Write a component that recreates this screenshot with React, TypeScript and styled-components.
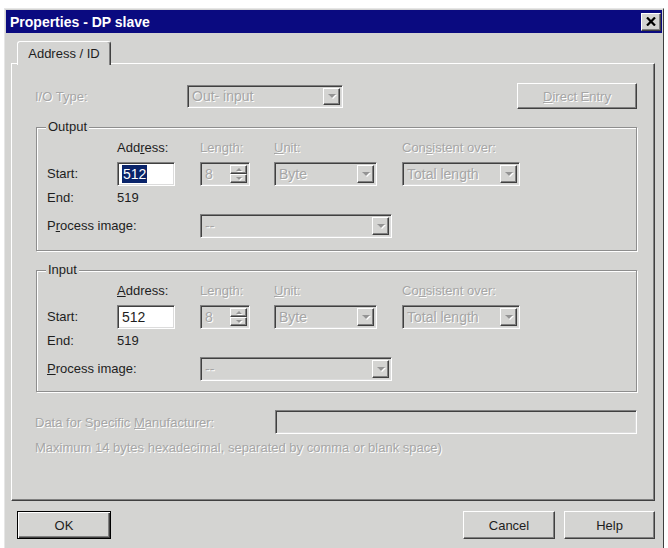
import styled, { createGlobalStyle } from 'styled-components';

const FACE = '#d4d4d2';

const GlobalStyle = createGlobalStyle`
  html, body {
    margin: 0;
    padding: 0;
    background: #ffffff;
    overflow: hidden;
  }
  body {
    font-family: 'Liberation Sans', Arial, sans-serif;
    font-size: 13px;
    color: #1e1e1e;
  }
  * {
    box-sizing: border-box;
  }
`;

const Window = styled.div`
  margin: 8px 0 0 4px;
  width: 660px;
  height: 560px;
  background: ${FACE};
  border: 1px solid;
  border-color: #e6e6e6 #404040 #404040 #e6e6e6;
  padding: 1px;
`;

const TitleBar = styled.div`
  height: 23px;
  background: #0a0a80;
  display: flex;
  align-items: center;
  justify-content: space-between;
  padding: 0 1px 0 4px;
`;

const TitleText = styled.span`
  color: #ffffff;
  font-weight: bold;
  font-size: 14px;
`;

const CloseButton = styled.div`
  width: 20px;
  height: 18px;
  background: ${FACE};
  border: 1px solid;
  border-color: #ffffff #404040 #404040 #ffffff;
  box-shadow: inset -1px -1px #808080;
  display: flex;
  align-items: center;
  justify-content: center;
`;

const Body = styled.div`
  padding: 8px 7px 0 5px;
`;

const TabStrip = styled.div`
  display: flex;
  height: 22px;
  padding-left: 6px;
`;

const Tab = styled.div`
  position: relative;
  z-index: 1;
  width: 94px;
  height: 24px;
  background: ${FACE};
  border: 1px solid;
  border-bottom: none;
  border-color: #ffffff #404040 transparent #ffffff;
  border-radius: 3px 3px 0 0;
  box-shadow: inset -1px 0 #808080;
  display: flex;
  align-items: center;
  justify-content: center;
  font-size: 13px;
`;

const Panel = styled.div`
  height: 438px;
  border: 1px solid;
  border-color: #ffffff #404040 #404040 #ffffff;
  box-shadow: inset -1px -1px #808080;
  padding: 19px 17px 0 23px;
`;

const TopRow = styled.div`
  display: flex;
  align-items: center;
  height: 26px;
`;

const RowLabel = styled.div<{ $w?: number }>`
  width: ${p => (p.$w ? `${p.$w}px` : 'auto')};
  flex-shrink: 0;
`;

const Dim = styled.span`
  color: #a6a6a6;
  text-shadow: 1px 1px 0 #ffffff;
`;

const Button = styled.div<{ $w: number; $h?: number; $default?: boolean }>`
  width: ${p => p.$w}px;
  height: ${p => p.$h ?? 28}px;
  background: ${FACE};
  display: flex;
  align-items: center;
  justify-content: center;
  font-size: 13px;
  border: 1px solid;
  border-color: ${p => (p.$default ? '#000000' : '#ffffff #404040 #404040 #ffffff')};
  box-shadow: ${p =>
    p.$default
      ? 'inset 1px 1px #ffffff, inset -1px -1px #404040, inset -2px -2px #808080'
      : 'inset -1px -1px #808080'};
`;

const PushRight = styled.div`
  margin-left: auto;
`;

const Group = styled.div<{ $h: number; $top: number }>`
  margin: ${p => p.$top}px 0 0 1px;
  height: ${p => p.$h}px;
  border: 1px solid #8e8e8e;
  box-shadow: 1px 1px 0 #ffffff, inset 1px 1px 0 #ffffff;
`;

const Legend = styled.div`
  width: fit-content;
  height: 16px;
  line-height: 16px;
  margin: -9px 0 0 9px;
  padding: 0 2px;
  background: ${FACE};
`;

const GroupGrid = styled.div`
  display: grid;
  grid-template-columns: 70px 83px 74px 128px 1fr;
  grid-template-rows: 22px 27px 25px 24px;
  align-items: start;
  padding: 5px 0 0 10px;
`;

const Cell = styled.div<{ $lh: number; $span?: string }>`
  line-height: ${p => p.$lh}px;
  grid-column: ${p => p.$span ?? 'auto'};
  white-space: nowrap;
`;

const Field = styled.div<{ $w: number; $h?: number; $white?: boolean }>`
  width: ${p => p.$w}px;
  height: ${p => p.$h ?? 24}px;
  display: flex;
  align-items: center;
  padding: 2px 2px 2px 4px;
  background: ${p => (p.$white ? '#ffffff' : FACE)};
  border: 1px solid;
  border-color: #808080 #ffffff #ffffff #808080;
  box-shadow: inset 1px 1px #404040, inset -1px -1px #dcdcdc;
  font-size: 14px;
`;

const Selected = styled.span`
  background: #0a246a;
  color: #ffffff;
  padding: 0 1px;
  line-height: 18px;
`;

const DropButton = styled.div`
  margin-left: auto;
  width: 17px;
  height: 100%;
  background: ${FACE};
  border: 1px solid;
  border-color: #ffffff #404040 #404040 #ffffff;
  box-shadow: inset -1px -1px #808080;
  display: flex;
  align-items: center;
  justify-content: center;
`;

const SpinColumn = styled.div`
  margin-left: auto;
  width: 17px;
  height: 100%;
  display: flex;
  flex-direction: column;
`;

const SpinHalf = styled(DropButton)`
  height: 50%;
  margin-left: 0;
`;

const Arrow = styled.div<{ $up?: boolean; $size?: number }>`
  width: 0;
  height: 0;
  border-left: ${p => p.$size ?? 4}px solid transparent;
  border-right: ${p => p.$size ?? 4}px solid transparent;
  border-top: ${p => (p.$up ? 'none' : `${p.$size ?? 4}px solid #949494`)};
  border-bottom: ${p => (p.$up ? `${p.$size ?? 4}px solid #949494` : 'none')};
  filter: drop-shadow(1px 1px 0 #ffffff);
`;

const DataRow = styled.div`
  display: grid;
  grid-template-columns: 240px 1fr;
  align-items: center;
  margin-top: 18px;
  height: 24px;
`;

const Note = styled.div`
  margin-top: 6px;
  line-height: 16px;
`;

const Buttons = styled.div`
  display: flex;
  align-items: center;
  gap: 9px;
  margin-top: 10px;
  padding-left: 6px;
`;

function Combo({ value = '', width, h }: { value?: string; width: number; h?: number }) {
  return (
    <Field $w={width} $h={h}>
      <Dim>{value}</Dim>
      <DropButton>
        <Arrow />
      </DropButton>
    </Field>
  );
}

function Spin({ value, width }: { value: string; width: number }) {
  return (
    <Field $w={width}>
      <Dim>{value}</Dim>
      <SpinColumn>
        <SpinHalf>
          <Arrow $up $size={3} />
        </SpinHalf>
        <SpinHalf>
          <Arrow $size={3} />
        </SpinHalf>
      </SpinColumn>
    </Field>
  );
}

type IoProps = {
  title: string;
  top: number;
  height: number;
  selected?: boolean;
  addressLabel: React.ReactNode;
  processLabel: React.ReactNode;
  consistentLabel: React.ReactNode;
};

function IoGroup({ title, top, height, selected, addressLabel, processLabel, consistentLabel }: IoProps) {
  return (
    <Group $top={top} $h={height}>
      <Legend>{title}</Legend>
      <GroupGrid>
        <div />
        <Cell $lh={16}>{addressLabel}</Cell>
        <Cell $lh={16}>
          <Dim>Length:</Dim>
        </Cell>
        <Cell $lh={16}>
          <Dim>
            <u>U</u>nit:
          </Dim>
        </Cell>
        <Cell $lh={16}>{consistentLabel}</Cell>

        <Cell $lh={24}>Start:</Cell>
        <Field $w={58} $white>
          {selected ? <Selected>512</Selected> : <span>512</span>}
        </Field>
        <Spin value="8" width={50} />
        <Combo value="Byte" width={103} />
        <Combo value="Total length" width={118} />

        <Cell $lh={18}>End:</Cell>
        <Cell $lh={18} $span="2 / 6">
          519
        </Cell>

        <Cell $lh={24} $span="1 / 3">
          {processLabel}
        </Cell>
        <Cell $lh={24} $span="3 / 6">
          <Combo value="--" width={192} />
        </Cell>
      </GroupGrid>
    </Group>
  );
}

export default function App() {
  return (
    <>
      <GlobalStyle />
      <Window>
        <TitleBar>
          <TitleText>Properties - DP slave</TitleText>
          <CloseButton>
            <svg width="10" height="9" viewBox="0 0 10 9">
              <path d="M1 0.5 L9 8.5 M9 0.5 L1 8.5" stroke="#000" strokeWidth="2.2" />
            </svg>
          </CloseButton>
        </TitleBar>
        <Body>
          <TabStrip>
            <Tab>Address / ID</Tab>
          </TabStrip>
          <Panel>
            <TopRow>
              <RowLabel $w={152}>
                <Dim>I/O Type:</Dim>
              </RowLabel>
              <Combo value="Out- input" width={156} h={23} />
              <PushRight>
                <Button $w={120} $h={26}>
                  <Dim>
                    <u>D</u>irect Entry
                  </Dim>
                </Button>
              </PushRight>
            </TopRow>

            <IoGroup
              title="Output"
              top={18}
              height={124}
              selected
              addressLabel={
                <>
                  Add<u>r</u>ess:
                </>
              }
              consistentLabel={
                <Dim>
                  Con<u>s</u>istent over:
                </Dim>
              }
              processLabel={
                <>
                  P<u>r</u>ocess image:
                </>
              }
            />

            <IoGroup
              title="Input"
              top={19}
              height={122}
              addressLabel={
                <>
                  <u>A</u>ddress:
                </>
              }
              consistentLabel={
                <Dim>
                  Co<u>n</u>sistent over:
                </Dim>
              }
              processLabel={
                <>
                  <u>P</u>rocess image:
                </>
              }
            />

            <DataRow>
              <Dim>
                Data for Specific <u>M</u>anufacturer:
              </Dim>
              <Field $w={362} />
            </DataRow>
            <Note>
              <Dim>Maximum 14 bytes hexadecimal, separated by comma or blank space)</Dim>
            </Note>
          </Panel>
          <Buttons>
            <Button $w={94} $default>
              OK
            </Button>
            <PushRight>
              <Button $w={92}>Cancel</Button>
            </PushRight>
            <Button $w={91}>Help</Button>
          </Buttons>
        </Body>
      </Window>
    </>
  );
}
